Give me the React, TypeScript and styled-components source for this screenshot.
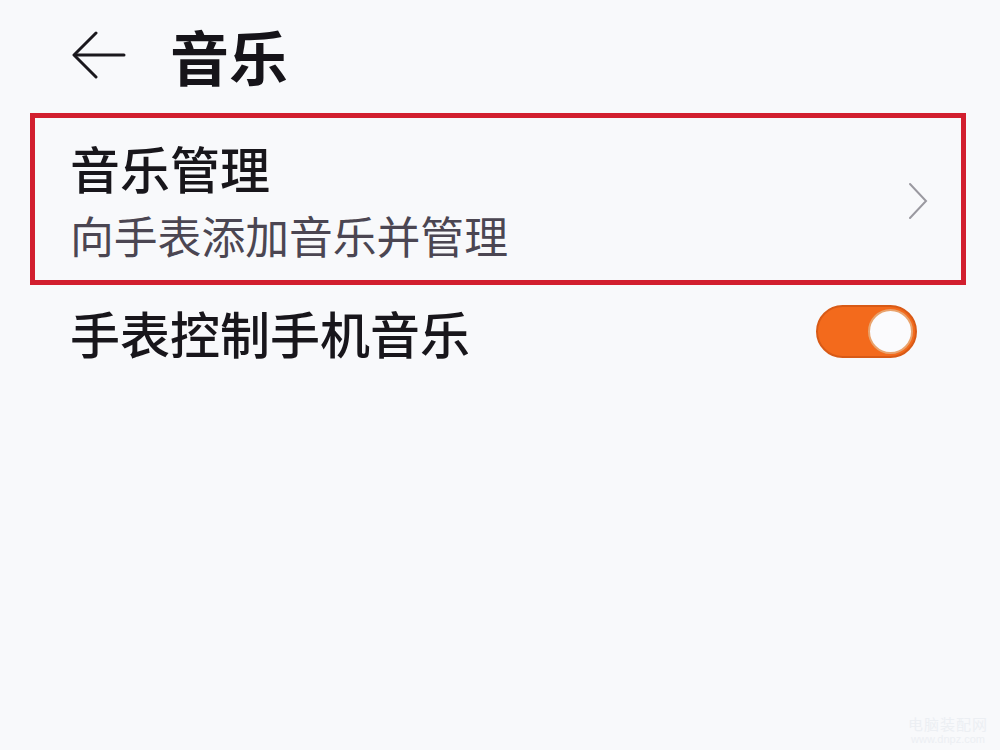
import styled, { createGlobalStyle } from "styled-components";

const GlobalStyle = createGlobalStyle`
  html, body {
    margin: 0;
    padding: 0;
    background: #f8f9fb;
  }
  body {
    font-family: "Noto Sans CJK SC", "Noto Sans", sans-serif;
    color: #16141a;
  }
`;

const Page = styled.div`
  width: 1000px;
  height: 750px;
  position: relative;
  overflow: hidden;
  background: #f8f9fb;
`;

const Header = styled.header`
  display: flex;
  align-items: center;
  height: 110px;
  padding-left: 72px;
  gap: 44px;
`;

const BackButton = styled.button`
  border: none;
  background: none;
  padding: 0;
  display: flex;
  color: #1a181d;
  svg {
    width: 54px;
    height: 50px;
  }
`;

const Title = styled.h1`
  margin: 0;
  font-size: 59px;
  font-weight: 700;
  line-height: 1;
  color: #161419;
`;

const Highlight = styled.section`
  margin: 3px 34px 0 30px;
  border: 5px solid #d21f2f;
  height: 172px;
  box-sizing: border-box;
  display: flex;
  align-items: center;
  padding: 2px 33px 0 35px;
`;

const ItemText = styled.div`
  flex: 1;
  display: flex;
  flex-direction: column;
  gap: 22px;
`;

const ItemTitle = styled.div`
  font-size: 50px;
  line-height: 1;
  font-weight: 500;
  color: #18161b;
`;

const ItemSub = styled.div`
  font-size: 43.8px;
  line-height: 1;
  font-weight: 400;
  color: #4b4652;
`;

const Chevron = styled.svg`
  width: 20px;
  height: 38px;
  margin-top: 2px;
`;

const Row = styled.div`
  display: flex;
  align-items: center;
  justify-content: space-between;
  padding: 20px 83px 0 70px;
`;

const RowLabel = styled.div`
  font-size: 50px;
  line-height: 1;
  font-weight: 500;
  color: #18161b;
`;

const Toggle = styled.div<{ $on: boolean }>`
  width: 101px;
  height: 53px;
  border-radius: 27px;
  box-sizing: border-box;
  background: ${(p) => (p.$on ? "#f36a1c" : "#d8d8dc")};
  border: 2px solid ${(p) => (p.$on ? "#d85a16" : "#c8c8cc")};
  display: flex;
  align-items: center;
  justify-content: ${(p) => (p.$on ? "flex-end" : "flex-start")};
  padding: 0 2px;
`;

const Thumb = styled.div`
  width: 45px;
  height: 45px;
  border-radius: 50%;
  background: #fbfbfd;
  border: 2px solid #e9a36d;
  box-sizing: border-box;
`;

const Watermark = styled.div`
  position: absolute;
  right: 12px;
  bottom: 4px;
  color: #eceff3;
  text-align: center;
  line-height: 1.2;
  & p {
    margin: 0;
  }
  & p:first-child {
    font-size: 15px;
    letter-spacing: 1px;
  }
  & p:last-child {
    font-size: 11px;
    font-family: "Liberation Sans", sans-serif;
  }
`;

export default function App() {
  return (
    <Page>
      <GlobalStyle />
      <Header>
        <BackButton aria-label="返回">
          <svg viewBox="0 0 54 50" fill="none" stroke="currentColor" strokeWidth="3" strokeLinecap="round" strokeLinejoin="round">
            <path d="M52 25H3" />
            <path d="M24 3L2 25l22 22" />
          </svg>
        </BackButton>
        <Title>音乐</Title>
      </Header>

      <Highlight>
        <ItemText>
          <ItemTitle>音乐管理</ItemTitle>
          <ItemSub>向手表添加音乐并管理</ItemSub>
        </ItemText>
        <Chevron viewBox="0 0 20 38" fill="none" stroke="#9a99a0" strokeWidth="2" strokeLinecap="round">
          <path d="M2 2l16 17L2 36" />
        </Chevron>
      </Highlight>

      <Row>
        <RowLabel>手表控制手机音乐</RowLabel>
        <Toggle $on>
          <Thumb />
        </Toggle>
      </Row>

      <Watermark>
        <p>电脑装配网</p>
        <p>www.dnpz.com</p>
      </Watermark>
    </Page>
  );
}
